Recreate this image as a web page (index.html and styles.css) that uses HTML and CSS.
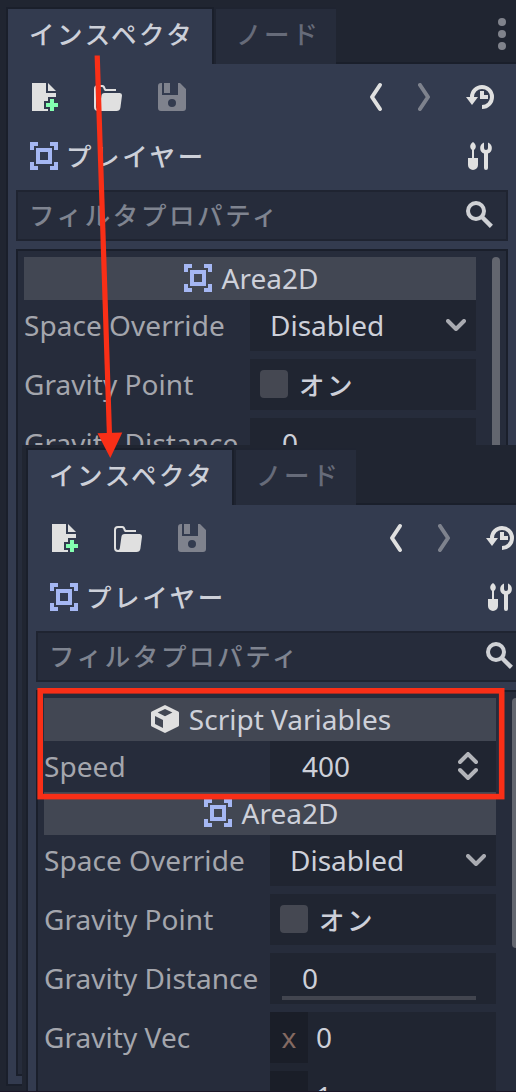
FILE: index.html
```html
<!DOCTYPE html>
<html lang="ja">
<head>
<meta charset="utf-8">
<title>インスペクタ</title>
<link rel="stylesheet" href="styles.css">
</head>
<body>
<svg class="defs" aria-hidden="true">
  <symbol id="new" viewBox="0 0 16 16"><path fill="#e0e0e0" d="M2 1v14h8v-1H8v-4h2V8h4V6H9V1zm8 0v4h4z"/><path fill="#84ffb1" d="M11 9v2H9v2h2v2h2v-2h2v-2h-2V9z"/></symbol>
  <symbol id="open" viewBox="0 0 16 16"><path fill="#e0e0e0" d="M3 2a2 2 0 0 0-2 2v9a2 2 0 0 0 2 2h9.2a2 2 0 0 0 2-1.6L15 7.3A1.2 1.2 0 0 0 13.900 6H6.300c-1 0-1.500.6-1.600 1.500L4 12.500c-.1.9-.3 1.500-1 1.500a1 1 0 0 1-1-1V4a1 1 0 0 1 1-1h1.800c.5 0 .8.3 1 1s.6 1 1.200 1H12V4H7.400c-.4 0-.6-.2-.8-.8S6 2 5.200 2z"/></symbol>
  <symbol id="save" viewBox="0 0 16 16"><path fill="#7f828d" fill-rule="evenodd" d="M2.500 1H3v6h8V1h1l3 3v9.500a1.500 1.500 0 0 1-1.500 1.500h-11A1.500 1.500 0 0 1 1 13.500v-11A1.500 1.500 0 0 1 2.500 1zM4 1h3v5H4zm4 8a2 2 0 1 0 0 4 2 2 0 0 0 0-4z"/></symbol>
  <symbol id="back" viewBox="0 0 8 16"><path class="line" d="M6 2 2 8l4 6"/></symbol>
  <symbol id="forward" viewBox="0 0 8 16"><path class="line" d="m2 2 4 6-4 6"/></symbol>
  <symbol id="history" viewBox="0 0 16 16"><path fill="none" stroke="#e0e0e0" stroke-width="2" d="M4 9V8a5 5 0 1 1 5 5"/><path fill="#e0e0e0" d="M1 8h6l-3 4zM8 5h2v2h2v2H8z"/></symbol>
  <symbol id="area" viewBox="0 0 16 16"><path fill="#a5b7f3" fill-rule="evenodd" d="M1 1v4h2V3h2V1zm10 0v2h2v2h2V1zM4 4v8h8V4zm2 2h4v4H6zm-5 5v4h4v-2H3v-2zm12 0v2h-2v2h4v-4z"/></symbol>
  <symbol id="tools" viewBox="0 0 16 16"><path fill="#e0e0e0" d="M4.500 1C3.900 1.400 3.100 2.300 3.100 3.100c0 .8.4 1.500.9 1.900v4H2v3.500a2.500 2.500 0 0 0 5 0V9H5V5c.5-.4.9-1.100.9-1.900 0-.8-.8-1.700-1.400-2.100zM10 1.200a3 3 0 0 0 0 5.600V14a1 1 0 0 0 2 0V6.800a3 3 0 0 0 0-5.600V4a1 1 0 0 1-2 0z"/></symbol>
  <symbol id="search" viewBox="0 0 16 16"><circle cx="6" cy="6" r="4" fill="none" stroke="#cfd1d5" stroke-width="2"/><path d="m9 9 4.700 4.700" stroke="#cfd1d5" stroke-width="2.200"/></symbol>
  <symbol id="cube" viewBox="0 0 16 16"><path fill="#e0e0e0" fill-rule="evenodd" d="m8 1 6.600 3.200q.4.200.4.700v6.200q0 .5-.4.700L8 15l-6.600-3.200q-.4-.2-.4-.7V4.900q0-.5.400-.7zM8 3 4.300 4.800 8 6.600l3.700-1.800zM3 6.500v4l4 2V8.500z"/></symbol>
  <symbol id="down" viewBox="0 0 20 12"><path fill="none" stroke="#a9abb1" stroke-width="4" stroke-linecap="round" stroke-linejoin="round" d="m2 2 8 8 8-8"/></symbol>
  <symbol id="spin" viewBox="0 0 20 28"><path fill="none" stroke="#b3b5ba" stroke-width="4" stroke-linecap="round" d="m2 10 8-8 8 8M2 18l8 8 8-8"/></symbol>
</svg>
<main class="screen">
  <section class="dock dock-rear">
    <nav class="tabs">
      <span class="tab active jp">インスペクタ</span><span class="tab jp">ノード</span>
      <span class="rest"><i class="kebab"></i></span>
    </nav>
    <div class="panel">
      <div class="toolbar">
        <svg class="icon"><use href="#new"/></svg><svg class="icon"><use href="#open"/></svg><svg class="icon"><use href="#save"/></svg>
        <svg class="arrow push"><use href="#back"/></svg><svg class="arrow dim"><use href="#forward"/></svg><svg class="icon"><use href="#history"/></svg>
      </div>
      <div class="object"><svg class="icon"><use href="#area"/></svg><span class="jp">プレイヤー</span><svg class="icon push"><use href="#tools"/></svg></div>
      <div class="filter"><span class="jp">フィルタプロパティ</span><svg class="icon push"><use href="#search"/></svg></div>
      <div class="tree">
        <div class="props">
          <h2><svg class="icon"><use href="#area"/></svg>Area2D</h2>
          <div class="row"><label>Space Override</label><div class="value choice">Disabled<svg class="down"><use href="#down"/></svg></div></div>
          <div class="row"><label>Gravity Point</label><div class="value check"><i class="box"></i><span class="jp">オン</span></div></div>
          <div class="row"><label>Gravity Distance</label><div class="value number">0</div></div>
        </div>
        <div class="scroll"></div>
      </div>
    </div>
  </section>

  <section class="dock dock-front">
    <nav class="tabs">
      <span class="tab active jp">インスペクタ</span><span class="tab jp">ノード</span>
      <span class="rest"></span>
    </nav>
    <div class="panel">
      <div class="toolbar">
        <svg class="icon"><use href="#new"/></svg><svg class="icon"><use href="#open"/></svg><svg class="icon"><use href="#save"/></svg>
        <svg class="arrow push"><use href="#back"/></svg><svg class="arrow dim"><use href="#forward"/></svg><svg class="icon"><use href="#history"/></svg>
      </div>
      <div class="object"><svg class="icon"><use href="#area"/></svg><span class="jp">プレイヤー</span><svg class="icon push"><use href="#tools"/></svg></div>
      <div class="filter"><span class="jp">フィルタプロパティ</span><svg class="icon push"><use href="#search"/></svg></div>
      <div class="tree">
        <div class="props">
          <h2><svg class="icon"><use href="#cube"/></svg>Script Variables</h2>
          <div class="row last"><label>Speed</label><div class="value number">400<svg class="spin"><use href="#spin"/></svg></div></div>
          <h2><svg class="icon"><use href="#area"/></svg>Area2D</h2>
          <div class="row"><label>Space Override</label><div class="value choice">Disabled<svg class="down"><use href="#down"/></svg></div></div>
          <div class="row"><label>Gravity Point</label><div class="value check"><i class="box"></i><span class="jp">オン</span></div></div>
          <div class="row"><label>Gravity Distance</label><div class="value number slider">0</div></div>
          <div class="row vector"><label>Gravity Vec</label><div class="value axes">
            <div class="axis"><b>x</b>0</div>
            <div class="axis"><b></b>1</div>
          </div></div>
        </div>
        <div class="scroll short"></div>
      </div>
    </div>
  </section>

  <svg class="marks" viewBox="0 0 516 1092">
    <rect x="40.200" y="690.800" width="461.500" height="105.800" fill="none" stroke="#f92f17" stroke-width="5.600"/>
    <path d="M97.200 55.500 109.500 436" stroke="#f92f17" stroke-width="5.200"/>
    <path d="m97.500 433.300 24.800-.8L110.300 458z" fill="#f92f17"/>
  </svg>
</main>
</body>
</html>
```
FILE: styles.css
```css
* { box-sizing: border-box; }
body { margin: 0; background: #202531; }
.defs { display: none; }
.screen {
  position: relative;
  width: 516px;
  height: 1092px;
  overflow: hidden;
  background: #202531;
  border-bottom: 1px solid #1b1627;
  font: 28px/1 "Noto Sans", sans-serif;
  color: #cdd0d9;
}
.jp {
  font-family: "Noto Sans CJK JP", sans-serif;
  font-size: 25.5px;
  font-weight: 500;
  letter-spacing: 2.6px;
  line-height: 26px;
  padding-bottom: 2px;
  margin-left: -1px;
  white-space: nowrap;
}
.icon { width: 32px; height: 32px; flex: none; }
.arrow { width: 16px; height: 32px; flex: none; }
.line { fill: none; stroke: #e0e0e0; stroke-width: 2; stroke-linecap: round; stroke-linejoin: round; }
.dim { opacity: .43; }
.push { margin-left: auto; }

.dock {
  position: absolute;
  width: 510px;
  display: flex;
  flex-direction: column;
}
.dock-rear { left: 6px; top: 0; height: 1086px; padding-top: 7px; }
.dock-front {
  left: 22px;
  top: 445px;
  width: 514px;
  height: 1082px;
  padding: 3px 0 0 4px;
  background: #202531;
}
.tabs { display: flex; height: 57px; flex: none; }
.tab {
  display: flex;
  align-items: center;
  width: 122px;
  margin: 0;
  padding: 0 0 8px 20px;
  border-top: 2px solid #1f2431;
  border-left: 2px solid #1f2431;
  background: #262c3b;
  color: #666b79;
}
.tab.active {
  width: 208px;
  padding-left: 21px;
  border: 2px solid #1a1f2b;
  border-bottom: 0;
  background: #333b4f;
  color: #cdd0d9;
}
.rest { flex: 1; border-bottom: 2px solid #1a1f2b; position: relative; }
.kebab {
  position: absolute;
  left: 162px;
  top: 11px;
  width: 8px;
  height: 8px;
  border-radius: 50%;
  background: #80838c;
  box-shadow: 0 12px #80838c, 0 24px #80838c;
}
.panel {
  flex: 1;
  display: flex;
  flex-direction: column;
  min-height: 0;
  padding: 0 0 8px 8px;
  background: #333b4f;
  border: solid #1a1f2b;
  border-width: 0 0 2px 2px;
}
.toolbar { display: flex; align-items: center; gap: 32px; height: 66px; padding: 0 20px 0 12px; flex: none; }
.object { display: flex; align-items: center; height: 60px; padding: 0 20px 0 12px; gap: 7px; flex: none; margin-top: -4px; }
.filter {
  display: flex;
  align-items: center;
  flex: none;
  width: 492px;
  height: 51px;
  margin-top: 4px;
  padding: 0 10px 0 12px;
  background: #262c3b;
  border: 2px solid #1f2431;
  color: #7f8490;
}
.filter .jp { padding-bottom: 4px; }
.filter .icon, h2 .icon, .value svg, .box { margin-bottom: 1px; }
.tree {
  flex: 1;
  display: flex;
  justify-content: space-between;
  width: 492px;
  min-height: 0;
  margin-top: 8px;
  padding: 6px;
  background: #262c3b;
  border: 2px solid #1a1f2b;
}
.props { width: 452px; }
h2 {
  display: flex;
  align-items: center;
  justify-content: center;
  gap: 8px;
  height: 43px;
  margin: 0;
  background: #424753;
  font-size: 28px;
  line-height: 43px;
  font-weight: 400;
}
.row { display: flex; height: 51px; margin-bottom: 8px; white-space: nowrap; line-height: 51px; }
.row.last { margin-bottom: 0; }
.row label { width: 226px; color: #a4a6ad; letter-spacing: .05px; }
.value { display: flex; align-items: center; width: 226px; background: #202531; }
.choice { padding: 0 10px 0 20px; justify-content: space-between; }
.down { width: 20px; height: 12px; }
.check { padding-left: 10px; gap: 12px; }
.box { width: 28px; height: 28px; border-radius: 4px; background: #454852; }
.number { padding: 0 18px 0 32px; justify-content: space-between; }
.spin { width: 20px; height: 28px; }
.slider {
  background: linear-gradient(#42454f, #42454f) 12px 43px / 194px 4px no-repeat #202531;
}
.vector { height: 110px; }
.axes { flex-direction: column; align-items: stretch; gap: 8px; }
.axis { display: flex; gap: 8px; height: 51px; }
.axis b { width: 38px; background: #1a1e28; color: #846a62; font-weight: 400; text-align: center; }
.scroll { width: 8px; border-radius: 4px 4px 0 0; background: #63666f; }
.short { height: 250px; border-radius: 4px; }
.marks { position: absolute; inset: 0; width: 516px; height: 1092px; }
```
